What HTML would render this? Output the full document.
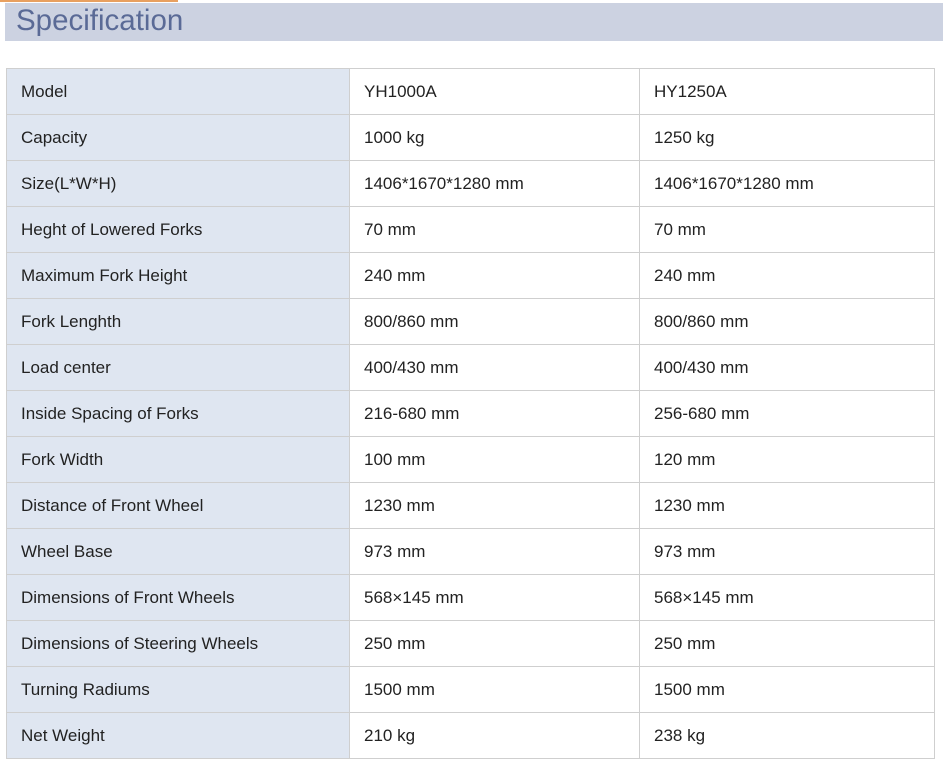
<!DOCTYPE html>
<html><head><style>
body{margin:0;background:#fff;font-family:"Liberation Sans",sans-serif;width:943px;height:764px;position:relative;overflow:hidden}
.or{position:absolute;left:0;top:0;width:178px;height:2px;background:#e8a060}
.hd{position:absolute;left:5px;top:3px;width:938px;height:38px;background:#ccd2e1;color:#5a6a96;font-size:29.5px;line-height:35px;padding-left:11px;box-sizing:border-box}
table{position:absolute;left:6px;top:68px;border-collapse:collapse;width:929px}
td{border:1px solid #cfcfcf;height:46px;padding:0 0 0 14px;font-size:17px;color:#222;box-sizing:border-box}
td:first-child{background:#dfe6f1;width:343px}
td:nth-child(2){width:290px}
</style></head><body>
<div class="or"></div>
<div class="hd">Specification</div>
<table>
<tr><td>Model</td><td>YH1000A</td><td>HY1250A</td></tr>
<tr><td>Capacity</td><td>1000 kg</td><td>1250 kg</td></tr>
<tr><td>Size(L*W*H)</td><td>1406*1670*1280 mm</td><td>1406*1670*1280 mm</td></tr>
<tr><td>Heght of Lowered Forks</td><td>70 mm</td><td>70 mm</td></tr>
<tr><td>Maximum Fork Height</td><td>240 mm</td><td>240 mm</td></tr>
<tr><td>Fork Lenghth</td><td>800/860 mm</td><td>800/860 mm</td></tr>
<tr><td>Load center</td><td>400/430 mm</td><td>400/430 mm</td></tr>
<tr><td>Inside Spacing of Forks</td><td>216-680 mm</td><td>256-680 mm</td></tr>
<tr><td>Fork Width</td><td>100 mm</td><td>120 mm</td></tr>
<tr><td>Distance of Front Wheel</td><td>1230 mm</td><td>1230 mm</td></tr>
<tr><td>Wheel Base</td><td>973 mm</td><td>973 mm</td></tr>
<tr><td>Dimensions of Front Wheels</td><td>568×145 mm</td><td>568×145 mm</td></tr>
<tr><td>Dimensions of Steering Wheels</td><td>250 mm</td><td>250 mm</td></tr>
<tr><td>Turning Radiums</td><td>1500 mm</td><td>1500 mm</td></tr>
<tr><td>Net Weight</td><td>210 kg</td><td>238 kg</td></tr>
</table>
</body></html>
